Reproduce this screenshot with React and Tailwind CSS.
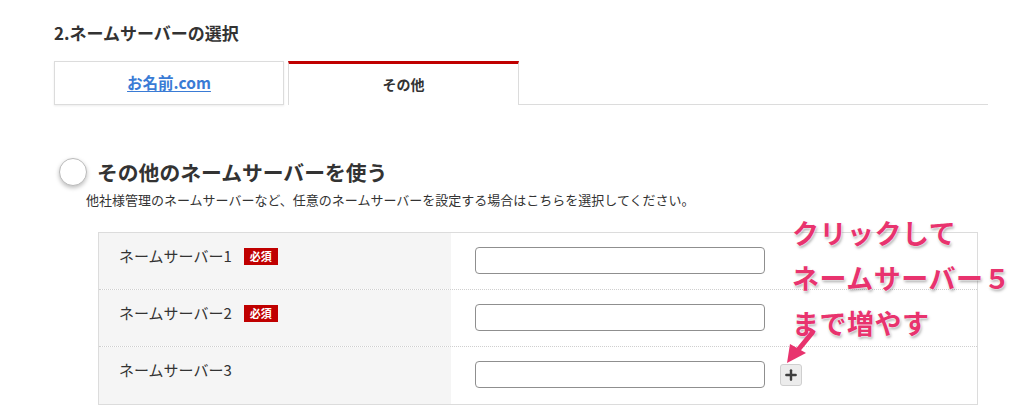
import { Plus } from 'lucide-react';

const font = { fontFamily: '"Noto Sans CJK JP", "Liberation Sans", sans-serif' };

const Fila = ({ nombre, requerido, ultima, boton }) => (
    <div className={`flex h-[57px] ${ultima ? '' : 'border-b border-dotted border-[#cfcfcf]'}`}>
        <div className="w-[352px] bg-[#f5f5f5] pl-[20px] pt-[14px] flex items-start">
            <span className="text-[15px] leading-[18px] text-[#333]">{nombre}</span>
            {requerido && (
                <span className="ml-[12px] mt-[1px] w-[34px] h-[17px] bg-[#c00000] text-white text-[11px] font-bold leading-[17px] text-center">必須</span>
            )}
        </div>
        <div className="flex-1 pl-[24px] pt-[14px] flex items-start">
            <input type="text" className="w-[290px] h-[27px] border border-[#8f8f8f] rounded-[4px] bg-white" />
            {boton && (
                <button className="ml-[15px] mt-[3px] w-[22px] h-[22px] bg-[#ececec] border border-[#cfcfcf] rounded-[3px] flex items-center justify-center">
                    <Plus size={16} strokeWidth={3.6} color="#3f3f3f" />
                </button>
            )}
        </div>
    </div>
)

export default function App() {
    return (
        <div className="relative w-[1024px] h-[416px] bg-white overflow-hidden pl-[54px] pt-[22px]" style={font}>
            <h2 className="text-[17px] leading-[22px] font-bold text-[#333]">2.ネームサーバーの選択</h2>

            {/* Tabs */}
            <div className="mt-[17px] flex w-[934px] h-[44px]">
                <div className="w-[230px] h-[44px] border border-[#dcdcdc] shadow-[0_1px_2px_rgba(0,0,0,0.08)] flex items-center justify-center">
                    <span className="text-[15.5px] font-bold text-[#3a7bd5] underline underline-offset-2">お名前.com</span>
                </div>
                <div className="ml-[4px] w-[231px] h-[44px] border-t-[3px] border-t-[#c00000] border-l border-r border-[#dcdcdc] flex items-center justify-center">
                    <span className="text-[14px] font-bold text-[#333]">その他</span>
                </div>
                <div className="flex-1 border-b border-[#dcdcdc]"></div>
            </div>

            {/* Radio */}
            <div className="mt-[53px] flex items-center h-[28px]">
                <span className="ml-[5px] w-[28px] h-[28px] rounded-full border border-[#bbb] bg-white shadow-[0_2px_4px_rgba(0,0,0,0.25)]"></span>
                <span className="ml-[10px] text-[20.8px] leading-[28px] font-bold text-[#333]">その他のネームサーバーを使う</span>
            </div>
            <p className="mt-[5px] ml-[32px] text-[13px] leading-[18px] text-[#333]">他社様管理のネームサーバーなど、任意のネームサーバーを設定する場合はこちらを選択してください。</p>

            {/* Tabla */}
            <div className="mt-[23px] ml-[44px] w-[880px] border border-[#dcdcdc]">
                <Fila nombre="ネームサーバー1" requerido />
                <Fila nombre="ネームサーバー2" requerido />
                <Fila nombre="ネームサーバー3" ultima boton />
            </div>

            {/* Anotación */}
            <div className="absolute left-[792px] top-[210px] text-[27px] tracking-[0.5px] leading-[45px] font-bold text-[#e8336e] [text-shadow:0_0_2px_#fff,0_0_2px_#fff,1px_2px_3px_rgba(0,0,0,0.35)]">
                <div>クリックして</div>
                <div>ネームサーバー５</div>
                <div>まで増やす</div>
            </div>
            <svg className="absolute left-[780px] top-[328px]" width="40" height="40" viewBox="0 0 40 40">
                <line x1="32" y1="5" x2="18" y2="22" stroke="#e8336e" strokeWidth="5" strokeLinecap="round" />
                <polygon points="7,35 10,16 26,25" fill="#e8336e" />
            </svg>
        </div>
    )
}
